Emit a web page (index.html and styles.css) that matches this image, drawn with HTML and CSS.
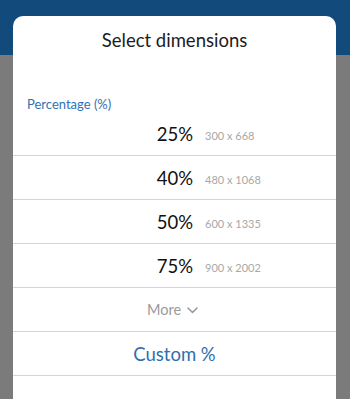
FILE: index.html
```html
<!DOCTYPE html>
<html>
<head>
<meta charset="utf-8">
<link rel="stylesheet" href="styles.css">
</head>
<body>
<div class="page">
  <div class="topbar"></div>
  <div class="backdrop"></div>
</div>
<div class="dialog">
  <div class="title">Select dimensions</div>
  <div class="section">Percentage (%)</div>
  <div class="row"><span class="pct">25%</span><span class="dim">300 x 668</span></div>
  <div class="row"><span class="pct">40%</span><span class="dim">480 x 1068</span></div>
  <div class="row"><span class="pct">50%</span><span class="dim">600 x 1335</span></div>
  <div class="row"><span class="pct">75%</span><span class="dim">900 x 2002</span></div>
  <div class="row more">More
    <svg class="chev" width="11" height="7" viewBox="0 0 11 7"><path d="M1 1 L5.5 5.5 L10 1" fill="none" stroke="#9a9a9a" stroke-width="1.6" stroke-linecap="round" stroke-linejoin="round"/></svg>
  </div>
  <div class="row custom">Custom %</div>
</div>
</body>
</html>
```

FILE: styles.css
```css
html, body {
  margin: 0;
  padding: 0;
  height: 100%;
  overflow: hidden;
}
body {
  font-family: "Lato", "Open Sans", sans-serif;
}
.page {
  display: flex;
  flex-direction: column;
  height: 100%;
}
.topbar {
  height: 55px;
  background: #134a7c;
}
.backdrop {
  flex: 1;
  background: #7b7b7b;
}
.dialog {
  position: absolute;
  left: 13px;
  top: 16px;
  width: 323px;
  bottom: 0;
  background: #fff;
  border-radius: 10px 10px 0 0;
  box-sizing: border-box;
  padding-top: 12px;
  overflow: hidden;
}
.title {
  text-align: center;
  font-size: 18.5px;
  line-height: 24px;
  color: #1c1c1c;
}
.section {
  margin-top: 44px;
  padding-left: 14px;
  font-size: 13px;
  line-height: 16px;
  color: #2f72b3;
}
.row {
  height: 43px;
  border-bottom: 1px solid #cbd6e0;
  display: flex;
  align-items: center;
}
.pct {
  width: 180px;
  text-align: right;
  font-size: 18.5px;
  color: #111;
}
.dim {
  margin-left: 12px;
  font-size: 11px;
  color: #a8a8a8;
  padding-top: 3px;
}
.more {
  justify-content: center;
  font-size: 14.5px;
  color: #9a9a9a;
  gap: 6px;
  padding-right: 4px;
}
.chev {
  margin-top: 1px;
}
.custom {
  justify-content: center;
  font-size: 18.5px;
  color: #2e6fae;
}
```
